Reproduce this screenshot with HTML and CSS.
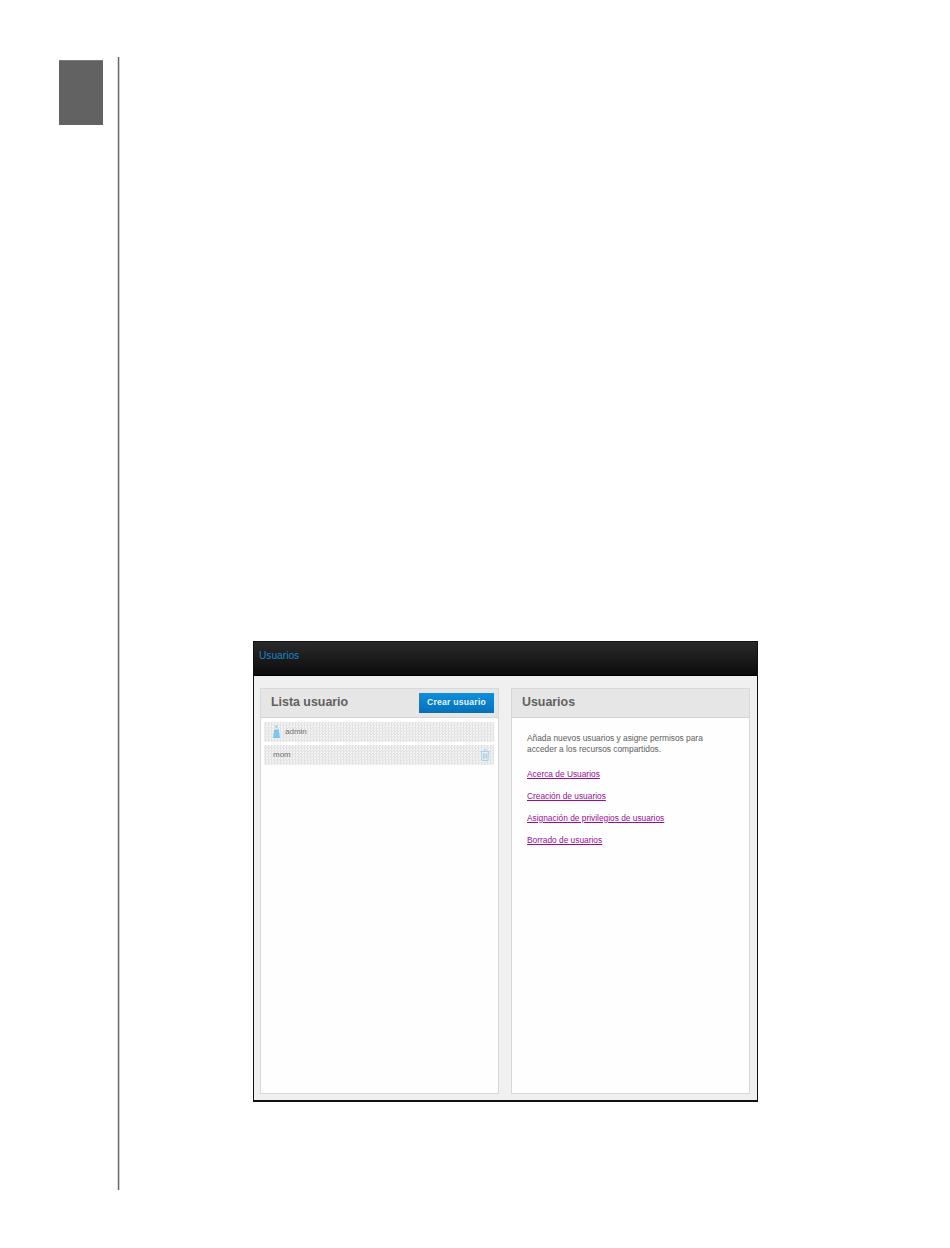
FILE: index.html
```html
<!DOCTYPE html>
<html lang="es">
<head>
  <meta charset="UTF-8">
  <title>Usuarios</title>
  <link rel="stylesheet" href="styles.css">
</head>
<body>

  <div class="chapter-tab"></div>
  <div class="chapter-rule"></div>

  <div class="content">
    <!-- Captura de la pantalla Usuarios -->
    <div class="screen">
      <div class="topbar"><span class="topbar-title">Usuarios</span></div>

      <div class="panels">
        <div class="panel">
          <div class="panel-head">
            <h2>Lista usuario</h2>
            <span class="create-btn">Crear usuario</span>
          </div>
          <div class="user-list">
            <div class="user-row">
              <svg class="user-icon" width="7" height="13" viewBox="0 0 7 13">
                <circle cx="3.5" cy="1.8" r="1.5" fill="#a5d6f2"/>
                <path d="M1.2 4.5h4.6L7 13H0z" fill="#7cc6ef"/>
              </svg>
              <span>admin</span>
            </div>
            <div class="user-row">
              <span>mom</span>
              <svg class="trash-icon" width="10" height="12" viewBox="0 0 10 12">
                <path d="M3.5 .8h3M.5 2.5h9M1.5 2.5l.5 9h6l.5-9M3.5 4.5v5M5 4.5v5M6.5 4.5v5" fill="none" stroke="#a6d2ec" stroke-width="1"/>
              </svg>
            </div>
          </div>
        </div>

        <div class="panel">
          <div class="panel-head">
            <h2>Usuarios</h2>
          </div>
          <div class="help">
            <p>Añada nuevos usuarios y asigne permisos para<br>acceder a los recursos compartidos.</p>
            <a href="#">Acerca de Usuarios</a>
            <a href="#">Creación de usuarios</a>
            <a href="#">Asignación de privilegios de usuarios</a>
            <a href="#">Borrado de usuarios</a>
          </div>
        </div>
      </div>
    </div>
  </div>

</body>
</html>
```

FILE: styles.css
```css
html, body {
  margin: 0;
  padding: 0;
  background: #fff;
}
body {
  display: flex;
  align-items: flex-start;
  height: 1248px;
  box-sizing: border-box;
  padding: 57px 0 0 59px;
  font-family: "Liberation Sans", Arial, sans-serif;
  color: #555;
  overflow: hidden;
}
.chapter-tab {
  width: 44px;
  height: 65px;
  margin-top: 3px;
  background: #626262;
  border-top: 1px solid #7d7d7d;
  box-sizing: border-box;
}
.chapter-rule {
  width: 1px;
  height: 1133px;
  margin-left: 14px;
  background: #6a6a6a;
  border-left: 1px solid #dcdcdc;
  border-right: 1px solid #d0d0d0;
}
.content {
  margin-left: 133px;
  padding-top: 584px;
}
.screen {
  width: 505px;
  height: 461px;
  box-sizing: border-box;
  border: 1px solid #111;
  border-width: 1px 1px 2px 1px;
  background: #f0f0f0;
  display: flex;
  flex-direction: column;
}
.topbar {
  height: 34px;
  flex: none;
  box-sizing: border-box;
  padding: 3px 0 0 5px;
  background: linear-gradient(#2a2a2a, #0c0c0c);
  border-bottom: 1px solid #000;
}
.topbar-title {
  font-size: 10.2px;
  color: #1b86cf;
}
.panels {
  flex: 1;
  display: flex;
  gap: 12px;
  padding: 12px 7px 6px 6px;
}
.panel {
  flex: 1;
  display: flex;
  flex-direction: column;
  background: #fefefe;
  border: 1px solid #d8d8d8;
}
.panel-head {
  height: 29px;
  flex: none;
  box-sizing: border-box;
  display: flex;
  align-items: center;
  justify-content: space-between;
  padding: 0 4px 0 10px;
  background: #e6e6e6;
  border-bottom: 1px solid #d4d4d4;
}
.panel-head h2 {
  margin: 0 0 2px;
  font-size: 12.4px;
  font-weight: bold;
  color: #616161;
}
.create-btn {
  width: 75px;
  height: 20px;
  line-height: 19px;
  text-align: center;
  font-size: 8.6px;
  letter-spacing: 0.25px;
  font-weight: bold;
  color: #e8f4fc;
  background: linear-gradient(#0f8fdc, #0670b8);
}
.user-list {
  display: flex;
  flex-direction: column;
  gap: 3px;
  padding: 4px 4px 4px 3px;
}
.user-row {
  height: 20px;
  display: flex;
  align-items: center;
  gap: 5px;
  padding: 0 4px 2px 9px;
  box-sizing: border-box;
  font-size: 8px;
  color: #707070;
  background-color: #f4f4f4;
  background-image: repeating-conic-gradient(#e2e2e2 0 25%, transparent 0 50%);
  background-size: 3px 3px;
}
.user-row:last-child {
  justify-content: space-between;
}
.trash-icon {
  margin-top: 2px;
}
.help {
  display: flex;
  flex-direction: column;
  align-items: flex-start;
  gap: 11.5px;
  padding: 15px 15px;
  font-size: 8.35px;
  line-height: 10.5px;
}
.help p {
  margin: 0 0 3px;
  color: #606060;
}
.help a {
  color: #960f92;
}
```
